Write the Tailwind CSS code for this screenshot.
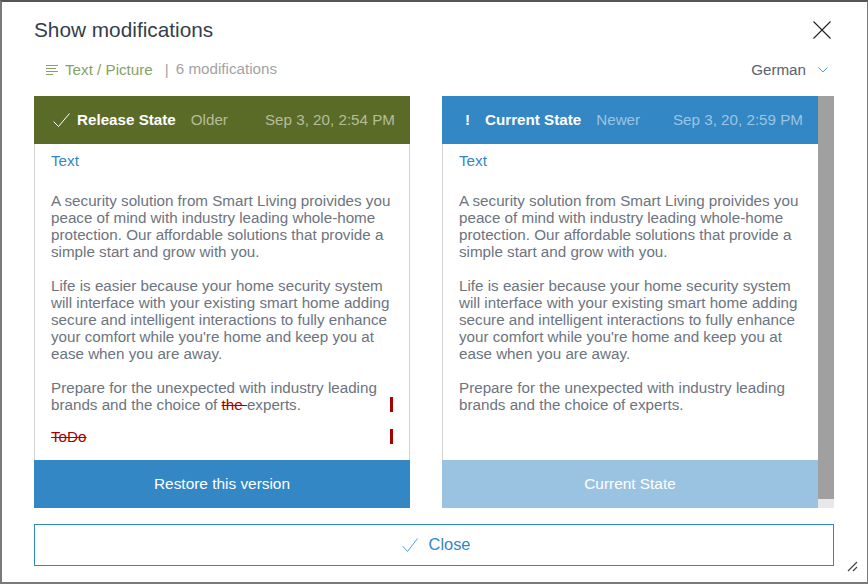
<!DOCTYPE html>
<html lang="en">
<head>
    <meta charset="UTF-8">
    <title>Show modifications</title>
    <script src="https://cdn.jsdelivr.net/npm/@tailwindcss/browser@4"></script>
</head>
<body class="w-[868px] h-[584px] overflow-hidden bg-white font-['Liberation_Sans',Arial,sans-serif]">
    <div class="relative flex flex-col w-[868px] h-[584px] bg-white border-2 border-r border-[#7a7a7a] border-t-[#555555] pl-[32px] pr-[33px]">
        <div class="flex items-center justify-between h-[56px] shrink-0">
            <h2 class="text-[20.8px] leading-[24px] text-[#343e4c]">Show modifications</h2>
            <svg class="w-[18px] h-[18px] mr-[3px]" viewBox="0 0 18 18" fill="none" stroke="#222222" stroke-width="1.1"><path d="M0.5 0.5 17.5 17.5M17.5 0.5 0.5 17.5"/></svg>
        </div>
        <div class="flex items-center justify-between h-[38px] pb-[13px] shrink-0">
            <div class="flex items-center pl-[12px] text-[15.2px]">
                <svg class="w-[12px] h-[10px] mr-[7px]" viewBox="0 0 12 10" fill="none" stroke="#85a265" stroke-width="1"><path d="M0 .5H12M0 3.5H10M0 6.5H12M0 9.5H7"/></svg>
                <span class="text-[#85a265]">Text / Picture</span>
                <span class="ml-[12px] text-[#a3a3a3]">|</span>
                <span class="ml-[7px] -mt-[2px] text-[#a3a3a3]">6 modifications</span>
            </div>
            <div class="flex items-center text-[15.2px] text-[#5b626c]">
                German
                <svg class="w-[10px] h-[6px] ml-[12px] mr-[6px]" viewBox="0 0 10 6" fill="none" stroke="#5a9bd0" stroke-width="1"><path d="M.5 .5 5 5 9.5 .5"/></svg>
            </div>
        </div>
        <div class="flex h-[412px] shrink-0">
            <section class="flex flex-col w-[376px] shrink-0 mr-[32px]">
                <header class="flex items-center h-[48px] bg-[#5a6b28] text-[15.2px] pl-[19px] pr-[15px]">
                    <svg class="w-[17px] h-[14px] mr-[7px]" viewBox="0 0 17 14" fill="none" stroke="white" stroke-width="1"><path d="M.5 8.5 5.5 13.5 16.5 .5"/></svg>
                    <span class="font-bold text-white">Release State</span>
                    <span class="ml-[15px] text-[#b4bd9a]">Older</span>
                    <span class="ml-auto text-[#b4bd9a]">Sep 3, 20, 2:54 PM</span>
                </header>
                <div class="relative flex-1 border-x border-[#d2d2d2] px-[16px] text-[15.2px] leading-[17px] text-[#6d7480]">
                    <p class="pt-[8px] text-[#3387c4]">Text</p>
                    <p class="mt-[23px]">A security solution from Smart Living proivides you peace of mind with industry leading whole-home protection. Our affordable solutions that provide a simple start and grow with you.</p>
                    <p class="mt-[17px]">Life is easier because your home security system will interface with your existing smart home adding secure and intelligent interactions to fully enhance your comfort while you're home and keep you at ease when you are away.</p>
                    <p class="mt-[17px]">Prepare for the unexpected with industry leading brands and the choice of <span class="line-through text-[#a80000]">the </span>experts.</p>
                    <p class="mt-[15px] line-through text-[#a80000]">ToDo</p>
                    <span class="absolute right-[16px] top-[253px] w-[3px] h-[15px] bg-[#a80000]"></span>
                    <span class="absolute right-[16px] top-[285px] w-[3px] h-[15px] bg-[#a80000]"></span>
                </div>
                <button class="h-[48px] bg-[#3387c4] text-white text-[15.4px]">Restore this version</button>
            </section>
            <section class="flex flex-col w-[376px] shrink-0">
                <header class="flex items-center h-[48px] bg-[#3387c4] text-[15.2px] pl-[23px] pr-[15px]">
                    <span class="w-[20px] font-bold text-white">!</span>
                    <span class="font-bold text-white">Current State</span>
                    <span class="ml-[15px] text-[#9cc4e2]">Newer</span>
                    <span class="ml-auto text-[#9cc4e2]">Sep 3, 20, 2:59 PM</span>
                </header>
                <div class="flex-1 border-l border-[#d2d2d2] px-[16px] text-[15.2px] leading-[17px] text-[#6d7480]">
                    <p class="pt-[8px] text-[#3387c4]">Text</p>
                    <p class="mt-[23px]">A security solution from Smart Living proivides you peace of mind with industry leading whole-home protection. Our affordable solutions that provide a simple start and grow with you.</p>
                    <p class="mt-[17px]">Life is easier because your home security system will interface with your existing smart home adding secure and intelligent interactions to fully enhance your comfort while you're home and keep you at ease when you are away.</p>
                    <p class="mt-[17px]">Prepare for the unexpected with industry leading brands and the choice of experts.</p>
                </div>
                <button class="h-[48px] bg-[#99c3e1] text-white text-[15.4px]">Current State</button>
            </section>
            <div class="flex flex-col w-[16px] shrink-0 bg-[#e8e8e8]">
                <div class="h-[403px] bg-[#a0a0a0]"></div>
            </div>
        </div>
        <button class="flex items-center justify-center w-[800px] h-[42px] mt-[16px] pl-[4px] pb-[2px] shrink-0 border border-[#3387c4] text-[#3387c4] text-[16.4px]">
            <svg class="w-[16px] h-[14px] mr-[11px] mt-[2px]" viewBox="0 0 16 14" fill="none" stroke="#5a9bd0" stroke-width="1"><path d="M.5 8 5.5 13.5 15.5 .5"/></svg>
            Close
        </button>
        <svg class="absolute right-[9px] bottom-[10px] w-[11px] h-[11px]" viewBox="0 0 11 11" fill="none" stroke="#444444" stroke-width="1.2"><path d="M1 10 10 1M6 10 10 6"/></svg>
    </div>
</body>
</html>
